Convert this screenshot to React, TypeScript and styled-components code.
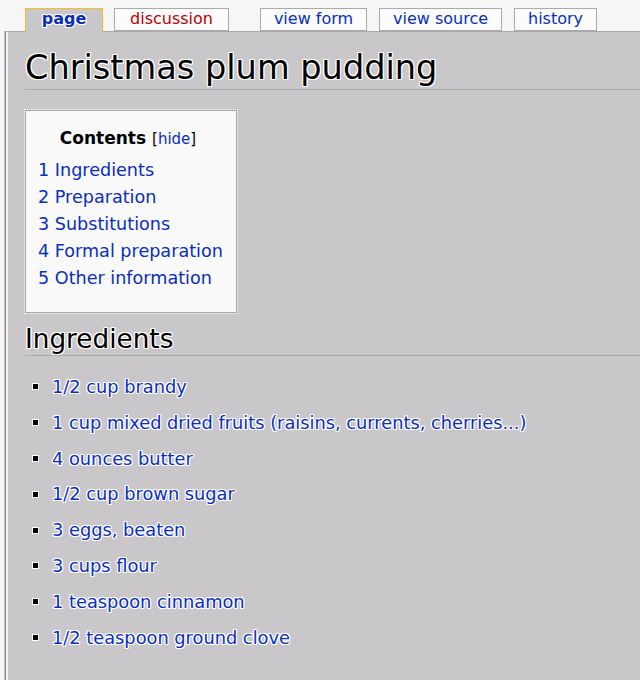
import styled, { createGlobalStyle } from "styled-components";

const GlobalStyle = createGlobalStyle`
  html, body {
    margin: 0;
    padding: 0;
    background: #f6f6f6;
    overflow: hidden;
  }
  body {
    font-family: "DejaVu Sans", Verdana, sans-serif;
  }
`;

const halo = `
  text-shadow:
    1px 0 0 #fff,
    -1px 0 0 #fff,
    0 1px 0 #fff,
    0 -1px 0 #fff,
    1px 1px 0 #fff,
    -1px -1px 0 #fff,
    1px -1px 0 #fff,
    -1px 1px 0 #fff;
`;

const Page = styled.div`
  width: 640px;
  height: 680px;
  overflow: hidden;
`;

const TabBar = styled.ul`
  display: flex;
  align-items: flex-end;
  height: 31px;
  margin: 0;
  padding: 0 0 0 25px;
  list-style: none;
  position: relative;
  z-index: 2;
`;

const Tab = styled.li<{ $active?: boolean; $gap?: number; $red?: boolean; $w: number }>`
  margin-left: ${(p) => p.$gap ?? 0}px;
  width: ${(p) => p.$w}px;
  height: ${(p) => (p.$active ? 24 : 23)}px;
  margin-bottom: ${(p) => (p.$active ? -1 : 0)}px;
  box-sizing: border-box;
  border: 1px solid ${(p) => (p.$active ? "#fabd23" : "#aaa")};
  border-bottom: ${(p) => (p.$active ? "none" : "1px solid #aaa")};
  background: ${(p) => (p.$active ? "#c9c7c9" : "#fcfcfc")};
  text-align: center;
  font-size: 16px;
  line-height: 20px;
  font-weight: ${(p) => (p.$active ? 700 : 400)};
  color: ${(p) => (p.$red ? "#ba0000" : "#0a2ebd")};
  white-space: nowrap;
  ${(p) => (p.$active ? halo : "")}
`;

const Content = styled.div`
  margin-left: 4px;
  width: 700px;
  height: 660px;
  background: #c9c7c9;
  border-left: 1px solid #bdbdbd;
  border-top: 1px solid #aaa;
  box-shadow: inset 1px 0 0 #8f8f8f, inset 3px 0 0 #f2f2f2;
  padding: 0 0 0 20px;
  ${halo}
`;

const Title = styled.h1`
  margin: 16px 0 0;
  padding: 0 0 1px;
  font-size: 33.6px;
  font-weight: 400;
  line-height: 40px;
  color: #000;
  border-bottom: 1px solid #aaa;
`;

const Toc = styled.div`
  margin-top: 20px;
  width: 212px;
  height: 203px;
  box-sizing: border-box;
  background: #f9f9f9;
  border: 1px solid #aaa;
  outline: 1px dotted #fff;
  padding: 15px 0 0 12px;
  text-shadow: none;
`;

const TocTitle = styled.div`
  text-align: center;
  padding-right: 18px;
  line-height: 24px;
  font-size: 17px;
  font-weight: 700;
  color: #000;
`;

const TocToggle = styled.span`
  font-size: 15px;
  font-weight: 400;
  color: #000;
  a {
    color: #0a2ebd;
  }
`;

const TocList = styled.ol`
  list-style: none;
  margin: 6px 0 0;
  padding: 0;
`;

const TocItem = styled.li`
  font-size: 17.6px;
  line-height: 27px;
  color: #0a2ebd;
  white-space: nowrap;
`;

const Heading = styled.h2`
  margin: 10px 0 0;
  padding: 0;
  font-size: 26.3px;
  font-weight: 400;
  line-height: 32px;
  color: #000;
  border-bottom: 1px solid #aaa;
`;

const Ingredients = styled.ul`
  list-style: none;
  margin: 13px 0 0;
  padding: 0 0 0 8px;
`;

const Ingredient = styled.li`
  display: flex;
  align-items: center;
  gap: 14px;
  font-size: 17.8px;
  line-height: 35.8px;
  color: #0a2ebd;
  white-space: nowrap;

  &::before {
    content: "";
    width: 5px;
    height: 5px;
    background: #000;
    box-shadow: 0 0 0 1px #fff;
    flex-shrink: 0;
  }
`;

const tabs = [
  { label: "page", active: true, gap: 0, w: 78 },
  { label: "discussion", red: true, gap: 11, w: 115 },
  { label: "view form", gap: 31, w: 107 },
  { label: "view source", gap: 12, w: 123 },
  { label: "history", gap: 12, w: 83 },
];

const toc = [
  "1 Ingredients",
  "2 Preparation",
  "3 Substitutions",
  "4 Formal preparation",
  "5 Other information",
];

const ingredients = [
  "1/2 cup brandy",
  "1 cup mixed dried fruits (raisins, currents, cherries...)",
  "4 ounces butter",
  "1/2 cup brown sugar",
  "3 eggs, beaten",
  "3 cups flour",
  "1 teaspoon cinnamon",
  "1/2 teaspoon ground clove",
];

export default function App() {
  return (
    <>
      <GlobalStyle />
      <Page>
        <TabBar>
          {tabs.map((t) => (
            <Tab key={t.label} $active={t.active} $red={t.red} $gap={t.gap} $w={t.w}>
              {t.label}
            </Tab>
          ))}
        </TabBar>
        <Content>
          <Title>Christmas plum pudding</Title>
          <Toc>
            <TocTitle>
              Contents{" "}
              <TocToggle>
                [<a>hide</a>]
              </TocToggle>
            </TocTitle>
            <TocList>
              {toc.map((item) => (
                <TocItem key={item}>{item}</TocItem>
              ))}
            </TocList>
          </Toc>
          <Heading>Ingredients</Heading>
          <Ingredients>
            {ingredients.map((item) => (
              <Ingredient key={item}>{item}</Ingredient>
            ))}
          </Ingredients>
        </Content>
      </Page>
    </>
  );
}
